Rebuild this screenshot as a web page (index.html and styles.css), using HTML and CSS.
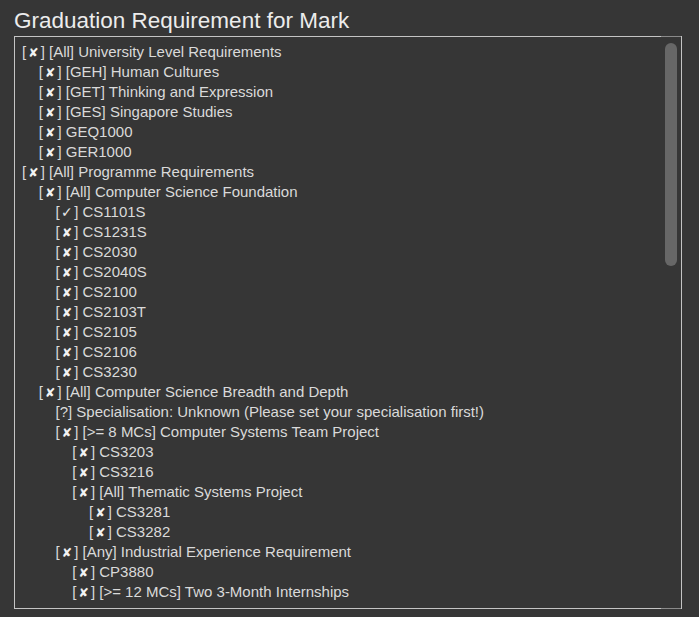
FILE: index.html
```html
<!DOCTYPE html>
<html lang="en">
<head>
<meta charset="utf-8">
<title>Graduation Requirement for Mark</title>
<link rel="stylesheet" href="styles.css">
</head>
<body>
<h1 class="title">Graduation Requirement for Mark</h1>
<div class="frame">
<div class="tree">
<ul class="level">
  <li><span class="row"><span class="st">[<b class="x">✘</b>]</span> [All] University Level Requirements</span>
    <ul class="level">
      <li><span class="row"><span class="st">[<b class="x">✘</b>]</span> [GEH] Human Cultures</span></li>
      <li><span class="row"><span class="st">[<b class="x">✘</b>]</span> [GET] Thinking and Expression</span></li>
      <li><span class="row"><span class="st">[<b class="x">✘</b>]</span> [GES] Singapore Studies</span></li>
      <li><span class="row"><span class="st">[<b class="x">✘</b>]</span> GEQ1000</span></li>
      <li><span class="row"><span class="st">[<b class="x">✘</b>]</span> GER1000</span></li>
    </ul>
  </li>
  <li><span class="row"><span class="st">[<b class="x">✘</b>]</span> [All] Programme Requirements</span>
    <ul class="level">
      <li><span class="row"><span class="st">[<b class="x">✘</b>]</span> [All] Computer Science Foundation</span>
        <ul class="level">
          <li><span class="row"><span class="st">[<b class="ok">✓</b>]</span> CS1101S</span></li>
          <li><span class="row"><span class="st">[<b class="x">✘</b>]</span> CS1231S</span></li>
          <li><span class="row"><span class="st">[<b class="x">✘</b>]</span> CS2030</span></li>
          <li><span class="row"><span class="st">[<b class="x">✘</b>]</span> CS2040S</span></li>
          <li><span class="row"><span class="st">[<b class="x">✘</b>]</span> CS2100</span></li>
          <li><span class="row"><span class="st">[<b class="x">✘</b>]</span> CS2103T</span></li>
          <li><span class="row"><span class="st">[<b class="x">✘</b>]</span> CS2105</span></li>
          <li><span class="row"><span class="st">[<b class="x">✘</b>]</span> CS2106</span></li>
          <li><span class="row"><span class="st">[<b class="x">✘</b>]</span> CS3230</span></li>
        </ul>
      </li>
      <li><span class="row"><span class="st">[<b class="x">✘</b>]</span> [All] Computer Science Breadth and Depth</span>
        <ul class="level">
          <li><span class="row">[?] Specialisation: Unknown (Please set your specialisation first!)</span></li>
          <li><span class="row"><span class="st">[<b class="x">✘</b>]</span> [&gt;= 8 MCs] Computer Systems Team Project</span>
            <ul class="level">
              <li><span class="row"><span class="st">[<b class="x">✘</b>]</span> CS3203</span></li>
              <li><span class="row"><span class="st">[<b class="x">✘</b>]</span> CS3216</span></li>
              <li><span class="row"><span class="st">[<b class="x">✘</b>]</span> [All] Thematic Systems Project</span>
                <ul class="level">
                  <li><span class="row"><span class="st">[<b class="x">✘</b>]</span> CS3281</span></li>
                  <li><span class="row"><span class="st">[<b class="x">✘</b>]</span> CS3282</span></li>
                </ul>
              </li>
            </ul>
          </li>
          <li><span class="row"><span class="st">[<b class="x">✘</b>]</span> [Any] Industrial Experience Requirement</span>
            <ul class="level">
              <li><span class="row"><span class="st">[<b class="x">✘</b>]</span> CP3880</span></li>
              <li><span class="row"><span class="st">[<b class="x">✘</b>]</span> [&gt;= 12 MCs] Two 3-Month Internships</span></li>
            </ul>
          </li>
        </ul>
      </li>
    </ul>
  </li>
</ul>
</div>
<div class="thumb"></div>
</div>
</body>
</html>
```

FILE: styles.css
```css
html, body {
  margin: 0;
  padding: 0;
  background: #363636;
}

body {
  padding: 0 17px 0 14px;
  font-family: "Liberation Sans", Arial, sans-serif;
  color: #dadada;
}

.title {
  margin: 8px 0 2px;
  font-size: 22.5px;
  line-height: 26px;
  font-weight: normal;
  color: #ececec;
}

.frame {
  position: relative;
  width: 668px;
}

.frame::before,
.frame::after {
  content: "";
  position: absolute;
  right: 1px;
  width: 20px;
  height: 1px;
  background: #8a8a8a;
}

.frame::before { top: 0; }
.frame::after { bottom: 0; }

.tree {
  box-sizing: border-box;
  height: 573px;
  border: 1px solid #c4c4c4;
  overflow: hidden;
  padding: 5px 24px 4px 7px;
  font-size: 15px;
  line-height: 20px;
}

.thumb {
  position: absolute;
  top: 7px;
  right: 5px;
  width: 12px;
  height: 223px;
  border-radius: 6px;
  background: #676767;
}

.level {
  list-style: none;
  margin: 0;
  padding: 0;
}

.level .level {
  padding-left: 16.75px;
}

.row {
  display: block;
  height: 20px;
  white-space: nowrap;
}

.x, .ok {
  display: inline-block;
  font-family: "DejaVu Sans", sans-serif;
  font-weight: normal;
  font-size: 12.5px;
  line-height: 1;
  width: 14.5px;
  text-align: center;
  color: #f2f2f2;
}

.ok {
  font-size: 14px;
  font-weight: normal;
  color: #e6e6e6;
}
```
